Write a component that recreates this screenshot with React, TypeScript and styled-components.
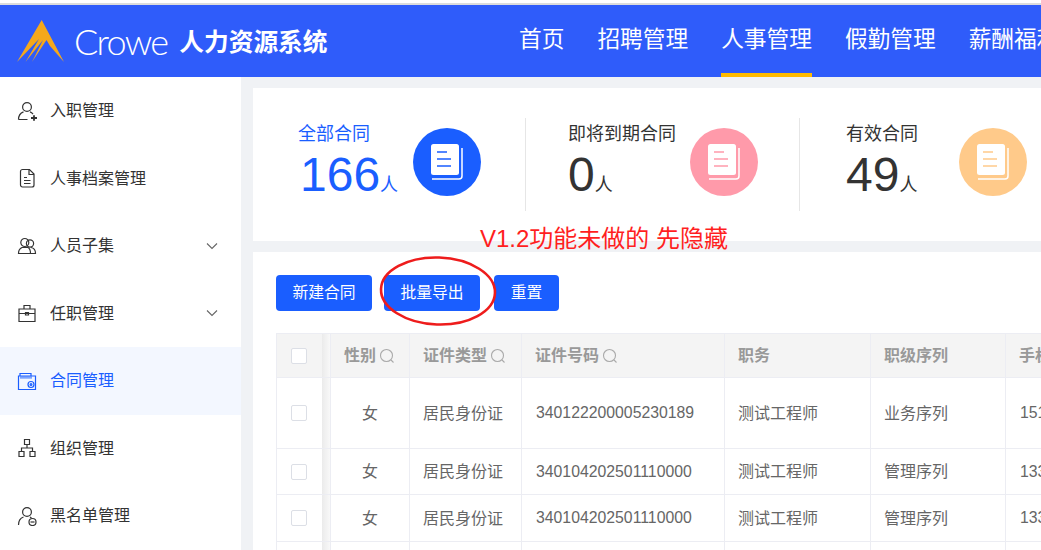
import React from "react";
import styled, { createGlobalStyle } from "styled-components";

const Global = createGlobalStyle`
  html, body { margin: 0; padding: 0; width: 1041px; height: 550px; overflow: hidden; background: #f0f2f5; }
  body { font-family: "Liberation Sans", "Noto Sans CJK SC", sans-serif; }
  * { box-sizing: border-box; }
`;

const Page = styled.div`
  position: relative;
  width: 1041px;
  height: 550px;
  overflow: hidden;
  display: flex;
  flex-direction: column;
`;
const TopStrip = styled.div`
  height: 5px;
  flex: none;
  background: #fff;
  border-top: 3px solid #fff;
  border-bottom: 2px solid #dcdcdc;
`;
const Header = styled.header`
  height: 72px;
  flex: none;
  background: #2f5cfa;
  display: flex;
  align-items: center;
  padding-left: 17px;
  overflow: hidden;
`;
const Brand = styled.div`
  display: flex;
  align-items: center;
  width: 502px;
  flex: none;
`;
const CroweWord = styled.span`
  font-family: "Lato", sans-serif;
  font-weight: 300;
  font-size: 36px;
  letter-spacing: -1.7px;
  color: #fff;
  margin-left: 9px;
  line-height: 72px;
`;
const SystemName = styled.span`
  font-family: "Noto Sans CJK SC", sans-serif;
  font-weight: 700;
  font-size: 24.7px;
  color: #fff;
  margin-left: 12px;
  padding-bottom: 3px;
`;
const Nav = styled.nav`
  display: flex;
  gap: 33px;
  height: 72px;
  flex: none;
`;
const NavItem = styled.div<{ $active?: boolean }>`
  font-family: "Noto Sans CJK SC", sans-serif;
  font-size: 22.7px;
  color: #fff;
  white-space: nowrap;
  height: 72px;
  line-height: 65px;
  border-bottom: 4px solid ${(p) => (p.$active ? "#ffbb00" : "transparent")};
`;
const Body = styled.div`
  flex: 1;
  display: flex;
  min-height: 0;
`;
const Sidebar = styled.aside`
  width: 241px;
  flex: none;
  background: #fff;
`;
const MenuRow = styled.div<{ $active?: boolean }>`
  height: 67.5px;
  display: flex;
  align-items: center;
  padding: 0 23px 0 17px;
  font-family: "Noto Sans CJK SC", sans-serif;
  font-size: 16px;
  color: ${(p) => (p.$active ? "#1a5eff" : "#333")};
  background: ${(p) => (p.$active ? "#f3f7ff" : "transparent")};
`;
const MenuIcon = styled.svg`
  width: 20px;
  height: 20px;
  flex: none;
  margin-right: 13px;
  fill: none;
  stroke: currentColor;
  stroke-width: 1.2;
`;
const MenuLabel = styled.span`
  flex: 1;
  padding-bottom: 3px;
`;
const Chevron = styled.svg`
  width: 12px;
  height: 8px;
  fill: none;
  stroke: #666;
  stroke-width: 1.1;
`;
const Main = styled.main`
  flex: 1;
  min-width: 0;
  padding: 11px 0 0 12px;
  display: flex;
  flex-direction: column;
  gap: 11px;
`;
const StatsCard = styled.section`
  height: 153px;
  flex: none;
  background: #fff;
  display: flex;
  align-items: center;
  overflow: hidden;
`;
const Stat = styled.div<{ $width: number; $pad: number; $divider?: boolean }>`
  width: ${(p) => p.$width}px;
  flex: none;
  height: 93px;
  padding-left: ${(p) => p.$pad}px;
  display: flex;
  align-items: center;
  border-right: ${(p) => (p.$divider ? "1px solid #e6e6e6" : "none")};
`;
const StatText = styled.div<{ $color: string; $width: number }>`
  width: ${(p) => p.$width}px;
  flex: none;
  color: ${(p) => p.$color};
`;
const StatTitle = styled.div`
  font-family: "Noto Sans CJK SC", sans-serif;
  font-size: 18px;
  line-height: 22px;
  margin-bottom: 6px;
  white-space: nowrap;
`;
const StatValue = styled.div<{ $indent?: number }>`
  font-size: 48px;
  line-height: 52px;
  padding-left: ${(p) => p.$indent ?? 0}px;
  white-space: nowrap;
`;
const StatUnit = styled.span`
  font-family: "Noto Sans CJK SC", sans-serif;
  font-size: 18px;
`;
const StatBadge = styled.div<{ $bg: string }>`
  width: 68px;
  height: 68px;
  flex: none;
  margin-top: -5px;
  border-radius: 50%;
  background: ${(p) => p.$bg};
  display: flex;
  align-items: center;
  justify-content: center;
`;
const ListCard = styled.section`
  flex: 1;
  background: #fff;
  padding: 23px 0 0 23px;
  min-height: 0;
  overflow: hidden;
`;
const Toolbar = styled.div`
  display: flex;
  gap: 12px;
  margin-bottom: 22px;
`;
const Button = styled.button<{ $width: number; $extraGap?: number }>`
  width: ${(p) => p.$width}px;
  height: 36px;
  margin-left: ${(p) => p.$extraGap ?? 0}px;
  border: none;
  border-radius: 4px;
  background: #1a5eff;
  color: #fff;
  font-family: "Noto Sans CJK SC", sans-serif;
  font-size: 15.8px;
  padding: 0 0 3px;
`;
const Table = styled.table`
  table-layout: fixed;
  border-collapse: collapse;
  width: 900px;
  font-family: "Liberation Sans", "Noto Sans CJK SC", sans-serif;
  font-size: 16px;
`;
const HeadCell = styled.th<{ $width: number }>`
  width: ${(p) => p.$width}px;
  background: #f4f4f4;
  border: 1px solid #ecedf3;
  color: #999;
  font-weight: 700;
  font-size: 16px;
  text-align: left;
  padding: 0 0 3px 13px;
  white-space: nowrap;
  overflow: hidden;
`;
const CheckHead = styled(HeadCell)`
  position: relative;
  padding: 0 0 0 14px;
  border-right: none;
`;
const Cell = styled.td<{ $center?: boolean; $digits?: boolean }>`
  border: 1px solid #ecedf3;
  color: #666;
  font-size: ${(p) => (p.$digits ? "15.8px" : "16px")};
  padding-top: 0;
  padding-right: 0;
  padding-bottom: ${(p) => (p.$digits ? "0" : "3px")};
  padding-left: ${(p) => (p.$center ? "0" : p.$digits ? "14px" : "13px")};
  text-align: ${(p) => (p.$center ? "center" : "left")};
  white-space: nowrap;
  overflow: hidden;
`;
const CheckCell = styled(Cell)`
  position: relative;
  padding: 0 0 0 14px;
  border-right: none;
`;
const FixedShadow = styled.span`
  position: absolute;
  top: 0;
  bottom: 0;
  right: 0;
  width: 8px;
  background: linear-gradient(to right, #ebebeb, #f8f8f8);
`;
const Row = styled.tr<{ $height: number }>`
  height: ${(p) => p.$height}px;
`;
const Checkbox = styled.span`
  display: block;
  width: 16px;
  height: 16px;
  background: #fff;
  border: 1px solid #dcdfe6;
  border-radius: 2px;
`;
const SearchIcon = styled.svg`
  width: 16px;
  height: 16px;
  margin-left: 3px;
  vertical-align: -3px;
  fill: none;
  stroke: #aaa;
  stroke-width: 1.1;
`;
const NoteText = styled.div`
  position: absolute;
  left: 480px;
  top: 223px;
  font-family: "Liberation Sans", "Noto Sans CJK SC", sans-serif;
  font-size: 24px;
  line-height: 32px;
  color: #ff1f1f;
  white-space: nowrap;
`;
const NoteCircle = styled.svg`
  position: absolute;
  left: 378px;
  top: 253px;
  width: 122px;
  height: 76px;
  fill: none;
  stroke: #ee1c1c;
  stroke-width: 2.6;
`;

const icons: Record<string, React.ReactNode> = {
  add: (
    <>
      <circle cx="10" cy="6" r="4.4" />
      <path d="M1.5 18.5c0-4 2.2-6.5 5-7.6M13 10.9c1.2.5 2.2 1.2 3 2.2M1.5 18.5h9" />
      <path d="M14 17h6M17 14.3v5.4" strokeWidth="1.8" />
    </>
  ),
  doc: (
    <>
      <path d="M5.5 1.5h7l4.5 4.5v11a2 2 0 0 1-2 2H5.500a2 2 0 0 1-2-2v-13.500a2 2 0 0 1 2-2z" />
      <path d="M12 1.500v5h5M7 9.500h3M7 12.500h6.500M7 15.500h6.500" />
    </>
  ),
  people: (
    <>
      <circle cx="7.800" cy="6.500" r="4" />
      <circle cx="13" cy="7.500" r="3.600" />
      <path d="M1.500 17.500c0-3.200 1.300-5 3.500-6h6c2 1 2.500 3 2.500 6zM14 11.500c2.800.4 4.500 2.300 4.500 6h-5" />
    </>
  ),
  case: (
    <>
      <path d="M2 6h16v12.500H2zM7 6V2.500h6V6M2 10.500h16M8.500 9.500h3v2.500h-3z" />
    </>
  ),
  contract: (
    <>
      <path d="M1.500 5h17v13.500h-17zM3 5V2.500h11V5" />
      <path d="M3 6.500h12" strokeWidth="2.400" opacity=".55" />
      <circle cx="14" cy="13.500" r="3" />
      <circle cx="14" cy="13.500" r=".9" />
    </>
  ),
  org: (
    <>
      <path d="M7.500 1.500h5v5h-5zM2 13.500h5v5H2zM13 13.500h5v5h-5zM10 6.500v3.500M4.500 13.500V10h11v3.500" />
    </>
  ),
  remove: (
    <>
      <circle cx="10" cy="6" r="4.400" />
      <path d="M1.500 19c0-4.200 2.200-7 5-8M13 10.900l1.500 1" />
      <circle cx="15.500" cy="16" r="3.500" />
      <path d="M13.500 16h4" />
    </>
  ),
};

const menu = [
  { label: "入职管理", icon: "add" },
  { label: "人事档案管理", icon: "doc" },
  { label: "人员子集", icon: "people", more: true },
  { label: "任职管理", icon: "case", more: true },
  { label: "合同管理", icon: "contract", active: true },
  { label: "组织管理", icon: "org" },
  { label: "黑名单管理", icon: "remove" },
];

const Book = ({ color }: { color: string }) => (
  <svg width="32" height="36" viewBox="0 0 32 36">
    <rect x="0" y="0" width="28" height="31" rx="2.500" fill="#fff" />
    <path d="M31 4V32a3 3 0 0 1-3 3H1" fill="none" stroke="#fff" strokeWidth="1.500" />
    <path d="M6 8h10M6 15h14M6 22h14" stroke={color} strokeWidth="1.600" />
  </svg>
);

const Search = () => (
  <SearchIcon viewBox="0 0 16 16">
    <circle cx="7.500" cy="7.500" r="6" />
    <path d="M12 12l2.500 2.500" />
  </SearchIcon>
);

const rows = [
  { h: 71, no: "340122200005230189", seq: "业务序列", phone: "151" },
  { h: 46, no: "340104202501110000", seq: "管理序列", phone: "133" },
  { h: 47, no: "340104202501110000", seq: "管理序列", phone: "133" },
  { h: 46, no: "", seq: "", phone: "" },
];

export default function App() {
  return (
    <Page>
      <Global />
      <TopStrip />
      <Header>
        <Brand>
          <svg width="48" height="44" viewBox="0 0 48 44">
            <path d="M24.700 1L47 43 33 27 29.500 21 15 43 26 21 8.500 43 22 20 0 43 Z" fill="#f5a81c" />
          </svg>
          <CroweWord>Crowe</CroweWord>
          <SystemName>人力资源系统</SystemName>
        </Brand>
        <Nav>
          <NavItem>首页</NavItem>
          <NavItem>招聘管理</NavItem>
          <NavItem $active>人事管理</NavItem>
          <NavItem>假勤管理</NavItem>
          <NavItem>薪酬福利管理</NavItem>
        </Nav>
      </Header>
      <Body>
        <Sidebar>
          {menu.map((m) => (
            <MenuRow key={m.label} $active={m.active}>
              <MenuIcon viewBox="0 0 20 20">{icons[m.icon]}</MenuIcon>
              <MenuLabel>{m.label}</MenuLabel>
              {m.more && (
                <Chevron viewBox="0 0 12 8">
                  <path d="M1 1.500l5 5 5-5" />
                </Chevron>
              )}
            </MenuRow>
          ))}
        </Sidebar>
        <Main>
          <StatsCard>
            <Stat $width={273} $pad={45} $divider>
              <StatText $color="#1a5eff" $width={115}>
                <StatTitle>全部合同</StatTitle>
                <StatValue $indent={2}>
                  166<StatUnit>人</StatUnit>
                </StatValue>
              </StatText>
              <StatBadge $bg="#1a5eff">
                <Book color="#1a5eff" />
              </StatBadge>
            </Stat>
            <Stat $width={274} $pad={42} $divider>
              <StatText $color="#333" $width={122}>
                <StatTitle>即将到期合同</StatTitle>
                <StatValue>
                  0<StatUnit>人</StatUnit>
                </StatValue>
              </StatText>
              <StatBadge $bg="#ff9aaa">
                <Book color="#ff9aaa" />
              </StatBadge>
            </Stat>
            <Stat $width={260} $pad={46}>
              <StatText $color="#333" $width={113}>
                <StatTitle>有效合同</StatTitle>
                <StatValue>
                  49<StatUnit>人</StatUnit>
                </StatValue>
              </StatText>
              <StatBadge $bg="#ffca8a">
                <Book color="#ffca8a" />
              </StatBadge>
            </Stat>
          </StatsCard>
          <ListCard>
            <Toolbar>
              <Button $width={96}>新建合同</Button>
              <Button $width={96}>批量导出</Button>
              <Button $width={65} $extraGap={2}>重置</Button>
            </Toolbar>
            <Table>
              <thead>
                <Row $height={44}>
                  <CheckHead $width={54}>
                    <Checkbox />
                    <FixedShadow />
                  </CheckHead>
                  <HeadCell $width={79}>
                    性别
                    <Search />
                  </HeadCell>
                  <HeadCell $width={112}>
                    证件类型
                    <Search />
                  </HeadCell>
                  <HeadCell $width={203}>
                    证件号码
                    <Search />
                  </HeadCell>
                  <HeadCell $width={146}>职务</HeadCell>
                  <HeadCell $width={135}>职级序列</HeadCell>
                  <HeadCell $width={171}>手机号码</HeadCell>
                </Row>
              </thead>
              <tbody>
                {rows.map((r, i) => (
                  <Row key={i} $height={r.h}>
                    <CheckCell>
                      {r.no && <Checkbox />}
                      <FixedShadow />
                    </CheckCell>
                    <Cell $center>{r.no && "女"}</Cell>
                    <Cell>{r.no && "居民身份证"}</Cell>
                    <Cell $digits>{r.no}</Cell>
                    <Cell>{r.no && "测试工程师"}</Cell>
                    <Cell>{r.seq}</Cell>
                    <Cell $digits>{r.phone && r.phone + "00000000"}</Cell>
                  </Row>
                ))}
              </tbody>
            </Table>
          </ListCard>
        </Main>
      </Body>
      <NoteText>V1.2功能未做的 先隐藏</NoteText>
      <NoteCircle viewBox="0 0 122 76">
        <ellipse cx="60" cy="38" rx="57" ry="33.500" transform="rotate(2 60 38)" />
      </NoteCircle>
    </Page>
  );
}
